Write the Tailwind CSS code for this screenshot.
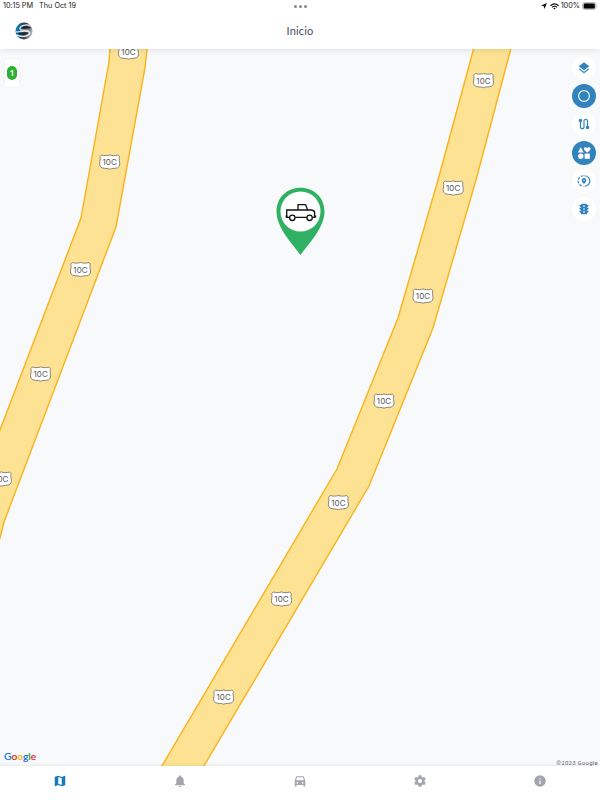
<!DOCTYPE html>
<html lang="es">

<head>
      <meta charset="UTF-8">
      <meta name="viewport" content="width=device-width, initial-scale=1.0">
      <title>Inicio</title>
      <script src="https://cdn.jsdelivr.net/npm/@tailwindcss/browser@4"></script>
</head>

<body class="bg-white font-['Inter',sans-serif]">
      <div class="relative flex h-screen w-full flex-col overflow-hidden">
            <!-- Header -->
            <header class="relative z-10 flex h-[49px] shrink-0 flex-col bg-white shadow-[0_1px_6px_rgba(0,0,0,0.1)]">
                  <div class="grid h-3 grid-cols-3 items-center pr-[2px] pl-[3px] text-[7.3px] leading-3 text-[#222]">
                        <div class="flex gap-[6px] whitespace-nowrap"><span class="tracking-[-0.05px]">10:15 PM</span><span>Thu Oct 19</span></div>
                        <div class="flex justify-center gap-[2px]">
                              <i class="size-[3px] rounded-full bg-[#858585]"></i>
                              <i class="size-[3px] rounded-full bg-[#858585]"></i>
                              <i class="size-[3px] rounded-full bg-[#858585]"></i>
                        </div>
                        <div class="flex items-center justify-end gap-[2px]">
                              <svg class="mr-[1px] size-[6px]" viewBox="0 0 12 12"><path d="M12 0L7 12L5.5 6.5L0 5Z" fill="#111" /></svg>
                              <svg class="h-[7px] w-[9px]" viewBox="0 0 18 14" fill="none" stroke="#111" stroke-width="2.3">
                                    <path d="M1 5.5Q9-2 17 5.5M4 8.8Q9 4.2 14 8.8" />
                                    <path d="M9 13L6.5 10.5Q9 8.5 11.5 10.5Z" fill="#111" stroke="none" />
                              </svg>
                              <span>100%</span>
                              <svg class="h-[8px] w-[16px]" viewBox="0 0 32 16">
                                    <rect x="1" y="1" width="27" height="14" rx="4.5" fill="#ccc" stroke="#b5b5b5" stroke-width="1.6" />
                                    <rect x="3.5" y="3" width="22" height="10" rx="2.5" fill="#050505" />
                                    <path d="M30 5.5Q32 8 30 10.5Z" fill="#aaa" />
                              </svg>
                        </div>
                  </div>
                  <div class="grid flex-1 grid-cols-3 items-center pl-[14.5px]">
                        <svg class="size-[18px]" viewBox="0 0 36 36">
                              <defs>
                                    <linearGradient id="globe" x1="0" x2="1" y1="0" y2="0.2">
                                          <stop offset="0" stop-color="#0a9be8" />
                                          <stop offset=".35" stop-color="#17507c" />
                                          <stop offset=".65" stop-color="#34383d" />
                                          <stop offset="1" stop-color="#a4a7aa" />
                                    </linearGradient>
                                    <clipPath id="globeClip"><circle cx="18" cy="18" r="17" /></clipPath>
                              </defs>
                              <circle cx="18" cy="18" r="17" fill="url(#globe)" />
                              <g clip-path="url(#globeClip)" fill="none">
                                    <path d="M34 8Q20 4 12 9Q7 14 13 16Q20 17 27 17" stroke="#d4d8dc" stroke-width="3" />
                                    <path d="M15 11.5Q22 9 31 12" stroke="#15191e" stroke-width="2.6" />
                                    <path d="M10 19Q22 17 29 20Q31 24 25 27Q15 31 3 26" stroke="#dfe7ec" stroke-width="3" />
                                    <path d="M7 23Q17 25 26 22" stroke="#1a2026" stroke-width="2.6" />
                                    <path d="M1 20Q5 20 11 19" stroke="#c9e9fa" stroke-width="2.4" />
                              </g>
                        </svg>
                        <h1 class="-ml-[14.5px] text-center font-['Lato',sans-serif] text-[11px] leading-4 tracking-[0.2px] text-[#4c4b66]">Inicio</h1>
                  </div>
            </header>

            <!-- Map -->
            <main class="relative h-[717px] shrink-0 overflow-hidden bg-[#f8f9fb]">
                  <svg class="block h-[717px] w-[600px]" viewBox="0 49 600 717">
                        <defs>
                              <g id="shield">
                                    <path d="M-8.3-7Q-6-6.2-3.5-6.4Q-1.5-6.4 0-7.1Q1.5-6.4 3.5-6.4Q6-6.2 8.3-7L9.8-5.4Q9.2-3.8 9.6-1.6Q10.5 2 9.7 4.2Q8.5 6.4 4.5 6.4Q1.5 6.4 0 7.2Q-1.5 6.4-4.5 6.4Q-8.5 6.4-9.7 4.2Q-10.5 2-9.6-1.6Q-9.2-3.8-9.8-5.4Z" fill="#fff" stroke="#6f6b66" stroke-width=".8" />
                                    <text y="3.4" text-anchor="middle" font-family="Inter, sans-serif" font-size="8" letter-spacing=".1" fill="#555">10C</text>
                              </g>
                        </defs>
                        <g fill="#fde293" stroke="#f9b31c" stroke-width="1.4">
                              <path d="M110.5 40L109 62L81 218L-5 443V552L0 538L4 522L116 227L145 68L148 40Z" />
                              <path d="M476 40L438 180L398 318L337 469L156 776H198L369 486L433 328L476 180L510 52L513 40Z" />
                        </g>
                        <use href="#shield" x="128.5" y="52" />
                        <use href="#shield" x="109.7" y="162" />
                        <use href="#shield" x="80.5" y="269.5" />
                        <use href="#shield" x="40.6" y="374" />
                        <use href="#shield" x="1.3" y="479" />
                        <use href="#shield" x="483.5" y="80.5" />
                        <use href="#shield" x="453.2" y="188" />
                        <use href="#shield" x="423" y="296" />
                        <use href="#shield" x="384" y="401" />
                        <use href="#shield" x="338.4" y="502.5" />
                        <use href="#shield" x="281.5" y="599" />
                        <use href="#shield" x="223.6" y="697" />
                  </svg>

                  <!-- Vehicle pin -->
                  <svg class="absolute top-[138px] left-[276px] h-[69px] w-[49px]" viewBox="0 0 49 69">
                        <path d="M24.5 68C17 57.5 .5 41 .5 24.5C.5 10.5 11 .7 24.5 .7S48.5 10.5 48.5 24.5C48.5 41 32 57.5 24.5 68Z" fill="#30b063" />
                        <circle cx="24.5" cy="24.5" r="20" fill="#fff" />
                        <g fill="none" stroke="#111" stroke-width="1.3">
                              <path d="M13.3 30.3H10.7V23H35.5Q38.6 23.4 38.6 25.5V30.3H36.5M19.3 30.3H30.7M22 23V17.6H29.6L31.6 23" />
                              <circle cx="16.3" cy="30.8" r="2.7" />
                              <circle cx="33.6" cy="30.8" r="2.7" />
                              <path d="M9.6 29.5H11.5M38.5 29.5H40.2" stroke-width="1.8" />
                        </g>
                  </svg>

                  <!-- Vehicle counter -->
                  <div class="absolute top-[10px] left-[5px] flex h-[28px] w-[14px] items-center justify-center rounded-[3px] bg-white shadow-[0_0_3px_rgba(0,0,0,0.06)]">
                        <span class="flex h-[14px] w-[10px] items-center justify-center rounded-full bg-[#2eaf35] font-['Open_Sans',sans-serif] text-[9px] font-semibold text-white">1</span>
                  </div>

                  <!-- Map controls -->
                  <div class="absolute top-[7px] right-[4.5px] flex flex-col gap-[4.2px] text-[#3182bd]">
                        <button class="flex size-[24px] items-center justify-center rounded-full bg-white">
                              <svg class="size-[14px]" viewBox="0 0 24 24" fill="currentColor"><path d="M12,16L19.36,10.27L21,9L12,2L3,9L4.63,10.27M12,18.54L4.62,12.81L3,14.07L12,21.07L21,14.07L19.37,12.8L12,18.54Z" /></svg>
                        </button>
                        <button class="flex size-[24px] items-center justify-center rounded-full bg-[#3182bd] text-white">
                              <svg class="size-[14px]" viewBox="0 0 14 14" fill="none" stroke="currentColor" stroke-width="1.2"><circle cx="7" cy="7" r="5.4" /></svg>
                        </button>
                        <button class="flex size-[24px] items-center justify-center rounded-full bg-white">
                              <svg class="size-[14px]" viewBox="0 0 24 24" fill="currentColor"><path d="M19 15.18V7c0-2.21-1.79-4-4-4s-4 1.79-4 4v10c0 1.1-.9 2-2 2s-2-.9-2-2V8.82C8.16 8.4 9 7.3 9 6c0-1.66-1.34-3-3-3S3 4.34 3 6c0 1.3.84 2.4 2 2.82V17c0 2.21 1.79 4 4 4s4-1.79 4-4V7c0-1.1.9-2 2-2s2 .9 2 2v8.18C15.84 15.6 15 16.7 15 18c0 1.66 1.34 3 3 3s3-1.34 3-3c0-1.3-.84-2.4-2-2.82z" /></svg>
                        </button>
                        <button class="flex size-[24px] items-center justify-center rounded-full bg-[#3182bd] text-white">
                              <svg class="size-[14px]" viewBox="0 0 24 24" fill="currentColor">
                                    <path d="M6.5 2L11.5 11H1.5ZM17.5 11.5L13.3 7.6C10.6 5 12 2.3 14.3 2.3C16 2.3 17 3.2 17.5 4C18 3.2 19 2.3 20.7 2.3C23 2.3 24.4 5 21.7 7.6Z" />
                                    <circle cx="6.5" cy="17.5" r="4.6" />
                                    <path d="M13 13H22V22H13Z" />
                              </svg>
                        </button>
                        <button class="flex size-[24px] items-center justify-center rounded-full bg-white">
                              <svg class="size-[14px]" viewBox="0 0 24 24">
                                    <path d="M13 3A9 9 0 0 1 13 21" fill="none" stroke="currentColor" stroke-width="2" />
                                    <path d="M11 3A9 9 0 0 0 11 21" fill="none" stroke="currentColor" stroke-width="2" stroke-dasharray="4.5 2.2" />
                                    <path d="M12 17C9.5 14.6 8 12.8 8 10.8A4 4 0 0 1 16 10.8C16 12.8 14.5 14.6 12 17Z" fill="currentColor" />
                                    <circle cx="12" cy="10.7" r="1.1" fill="#fff" />
                              </svg>
                        </button>
                        <button class="flex size-[24px] items-center justify-center rounded-full bg-white">
                              <svg class="size-[14px]" viewBox="0 0 24 24">
                                    <path d="M20 10H17V8.86C18.72 8.41 20 6.86 20 5H17V4C17 3.45 16.55 3 16 3H8C7.45 3 7 3.45 7 4V5H4C4 6.86 5.28 8.41 7 8.86V10H4C4 11.86 5.28 13.41 7 13.86V15H4C4 16.86 5.28 18.41 7 18.86V20C7 20.55 7.45 21 8 21H16C16.55 21 17 20.55 17 20V18.86C18.72 18.41 20 16.86 20 15H17V13.86C18.72 13.41 20 11.86 20 10Z" fill="currentColor" />
                                    <g fill="#fff">
                                          <circle cx="12" cy="7" r="1.4" />
                                          <circle cx="12" cy="12" r="1.4" />
                                          <circle cx="12" cy="17" r="1.4" />
                                    </g>
                              </svg>
                        </button>
                  </div>

                  <!-- Attribution -->
                  <div class="absolute bottom-[3px] left-[4px] font-['Lato',sans-serif] text-[10.2px] leading-[14px] font-medium whitespace-nowrap [-webkit-text-stroke:0.15px_currentColor]"><span class="text-[#1a6ef0]">G</span><span class="text-[#e3261b]">o</span><span class="text-[#fbb605]">o</span><span class="text-[#1a6ef0]">g</span><span class="text-[#1f9c40]">l</span><span class="text-[#e3261b]">e</span></div>
                  <div class="absolute right-[2px] bottom-0 font-['Roboto',sans-serif] text-[6px] leading-[7px] tracking-[0.25px] text-[#666]">©2023 Google</div>
            </main>

            <!-- Bottom tabs -->
            <nav class="relative z-10 grid flex-1 grid-cols-5 bg-white pb-[4px] text-[#a2a5ad] shadow-[0_-1px_3px_rgba(0,0,0,0.07)]">
                  <a class="flex items-center justify-center text-[#187bb8]">
                        <svg class="size-[14px]" viewBox="0 0 24 24" fill="currentColor"><path d="M15,19L9,16.89V5L15,7.11M20.5,3C20.44,3 20.39,3 20.34,3L15,5.1L9,3L3.36,4.9C3.15,4.97 3,5.15 3,5.38V20.5A0.5,0.5 0 0,0 3.5,21C3.55,21 3.61,21 3.66,20.97L9,18.9L15,21L20.64,19.1C20.85,19 21,18.85 21,18.62V3.5A0.5,0.5 0 0,0 20.5,3Z" /></svg>
                  </a>
                  <a class="flex items-center justify-center">
                        <svg class="size-[14px]" viewBox="0 0 24 24" fill="currentColor"><path d="M12 22.5C13.1 22.5 14 21.6 14 20.5H10C10 21.6 10.9 22.5 12 22.5ZM18.3 16V11C18.3 7.8 16.4 5.2 13.5 4.4V3.5A1.5 1.5 0 0 0 10.5 3.5V4.4C7.6 5.2 5.7 7.8 5.7 11V16L3.5 18V19.3H20.5V18Z" /></svg>
                  </a>
                  <a class="flex items-center justify-center">
                        <svg class="size-[14px]" viewBox="0 0 24 24" fill="currentColor"><path d="M18.92 5.01C18.72 4.42 18.16 4 17.5 4H6.5C5.84 4 5.29 4.42 5.08 5.01L3 11V20.5C3 21 3.45 21.5 4 21.5H5C5.55 21.5 6 21 6 20.5V19H18V20.5C18 21 18.45 21.5 19 21.5H20C20.55 21.5 21 21 21 20.5V11ZM6.85 5.7H17.14L18.6 10.6H5.4ZM7.5 16.5A1.5 1.5 0 0 1 7.5 13.5A1.5 1.5 0 0 1 7.5 16.5ZM16.5 16.5A1.5 1.5 0 0 1 16.5 13.5A1.5 1.5 0 0 1 16.5 16.5Z" fill-rule="evenodd" /></svg>
                  </a>
                  <a class="flex items-center justify-center">
                        <svg class="size-[14px]" viewBox="0 0 24 24" fill="currentColor"><path d="M12,15.5A3.5,3.5 0 0,1 8.5,12A3.5,3.5 0 0,1 12,8.5A3.5,3.5 0 0,1 15.5,12A3.5,3.5 0 0,1 12,15.5M19.43,12.97C19.47,12.65 19.5,12.33 19.5,12C19.5,11.67 19.47,11.34 19.43,11L21.54,9.37C21.73,9.22 21.78,8.95 21.66,8.73L19.66,5.27C19.54,5.05 19.27,4.96 19.05,5.05L16.56,6.05C16.04,5.66 15.5,5.32 14.87,5.07L14.5,2.42C14.46,2.18 14.25,2 14,2H10C9.75,2 9.54,2.18 9.5,2.42L9.13,5.07C8.5,5.32 7.96,5.66 7.44,6.05L4.95,5.05C4.73,4.96 4.46,5.05 4.34,5.27L2.34,8.73C2.21,8.95 2.27,9.22 2.46,9.37L4.57,11C4.53,11.34 4.5,11.67 4.5,12C4.5,12.33 4.53,12.65 4.57,12.97L2.46,14.63C2.27,14.78 2.21,15.05 2.34,15.27L4.34,18.73C4.46,18.95 4.73,19.03 4.95,18.95L7.44,17.94C7.96,18.34 8.5,18.68 9.13,18.93L9.5,21.58C9.54,21.82 9.75,22 10,22H14C14.25,22 14.46,21.82 14.5,21.58L14.87,18.93C15.5,18.67 16.04,18.34 16.56,17.94L19.05,18.95C19.27,19.03 19.54,18.95 19.66,18.73L21.66,15.27C21.78,15.05 21.73,14.78 21.54,14.63L19.43,12.97Z" /></svg>
                  </a>
                  <a class="flex items-center justify-center">
                        <svg class="size-[14px]" viewBox="0 0 24 24" fill="currentColor"><path d="M13,9H11V7H13M13,17H11V11H13M12,2A10,10 0 0,0 2,12A10,10 0 0,0 12,22A10,10 0 0,0 22,12A10,10 0 0,0 12,2Z" /></svg>
                  </a>
            </nav>
      </div>
</body>

</html>
